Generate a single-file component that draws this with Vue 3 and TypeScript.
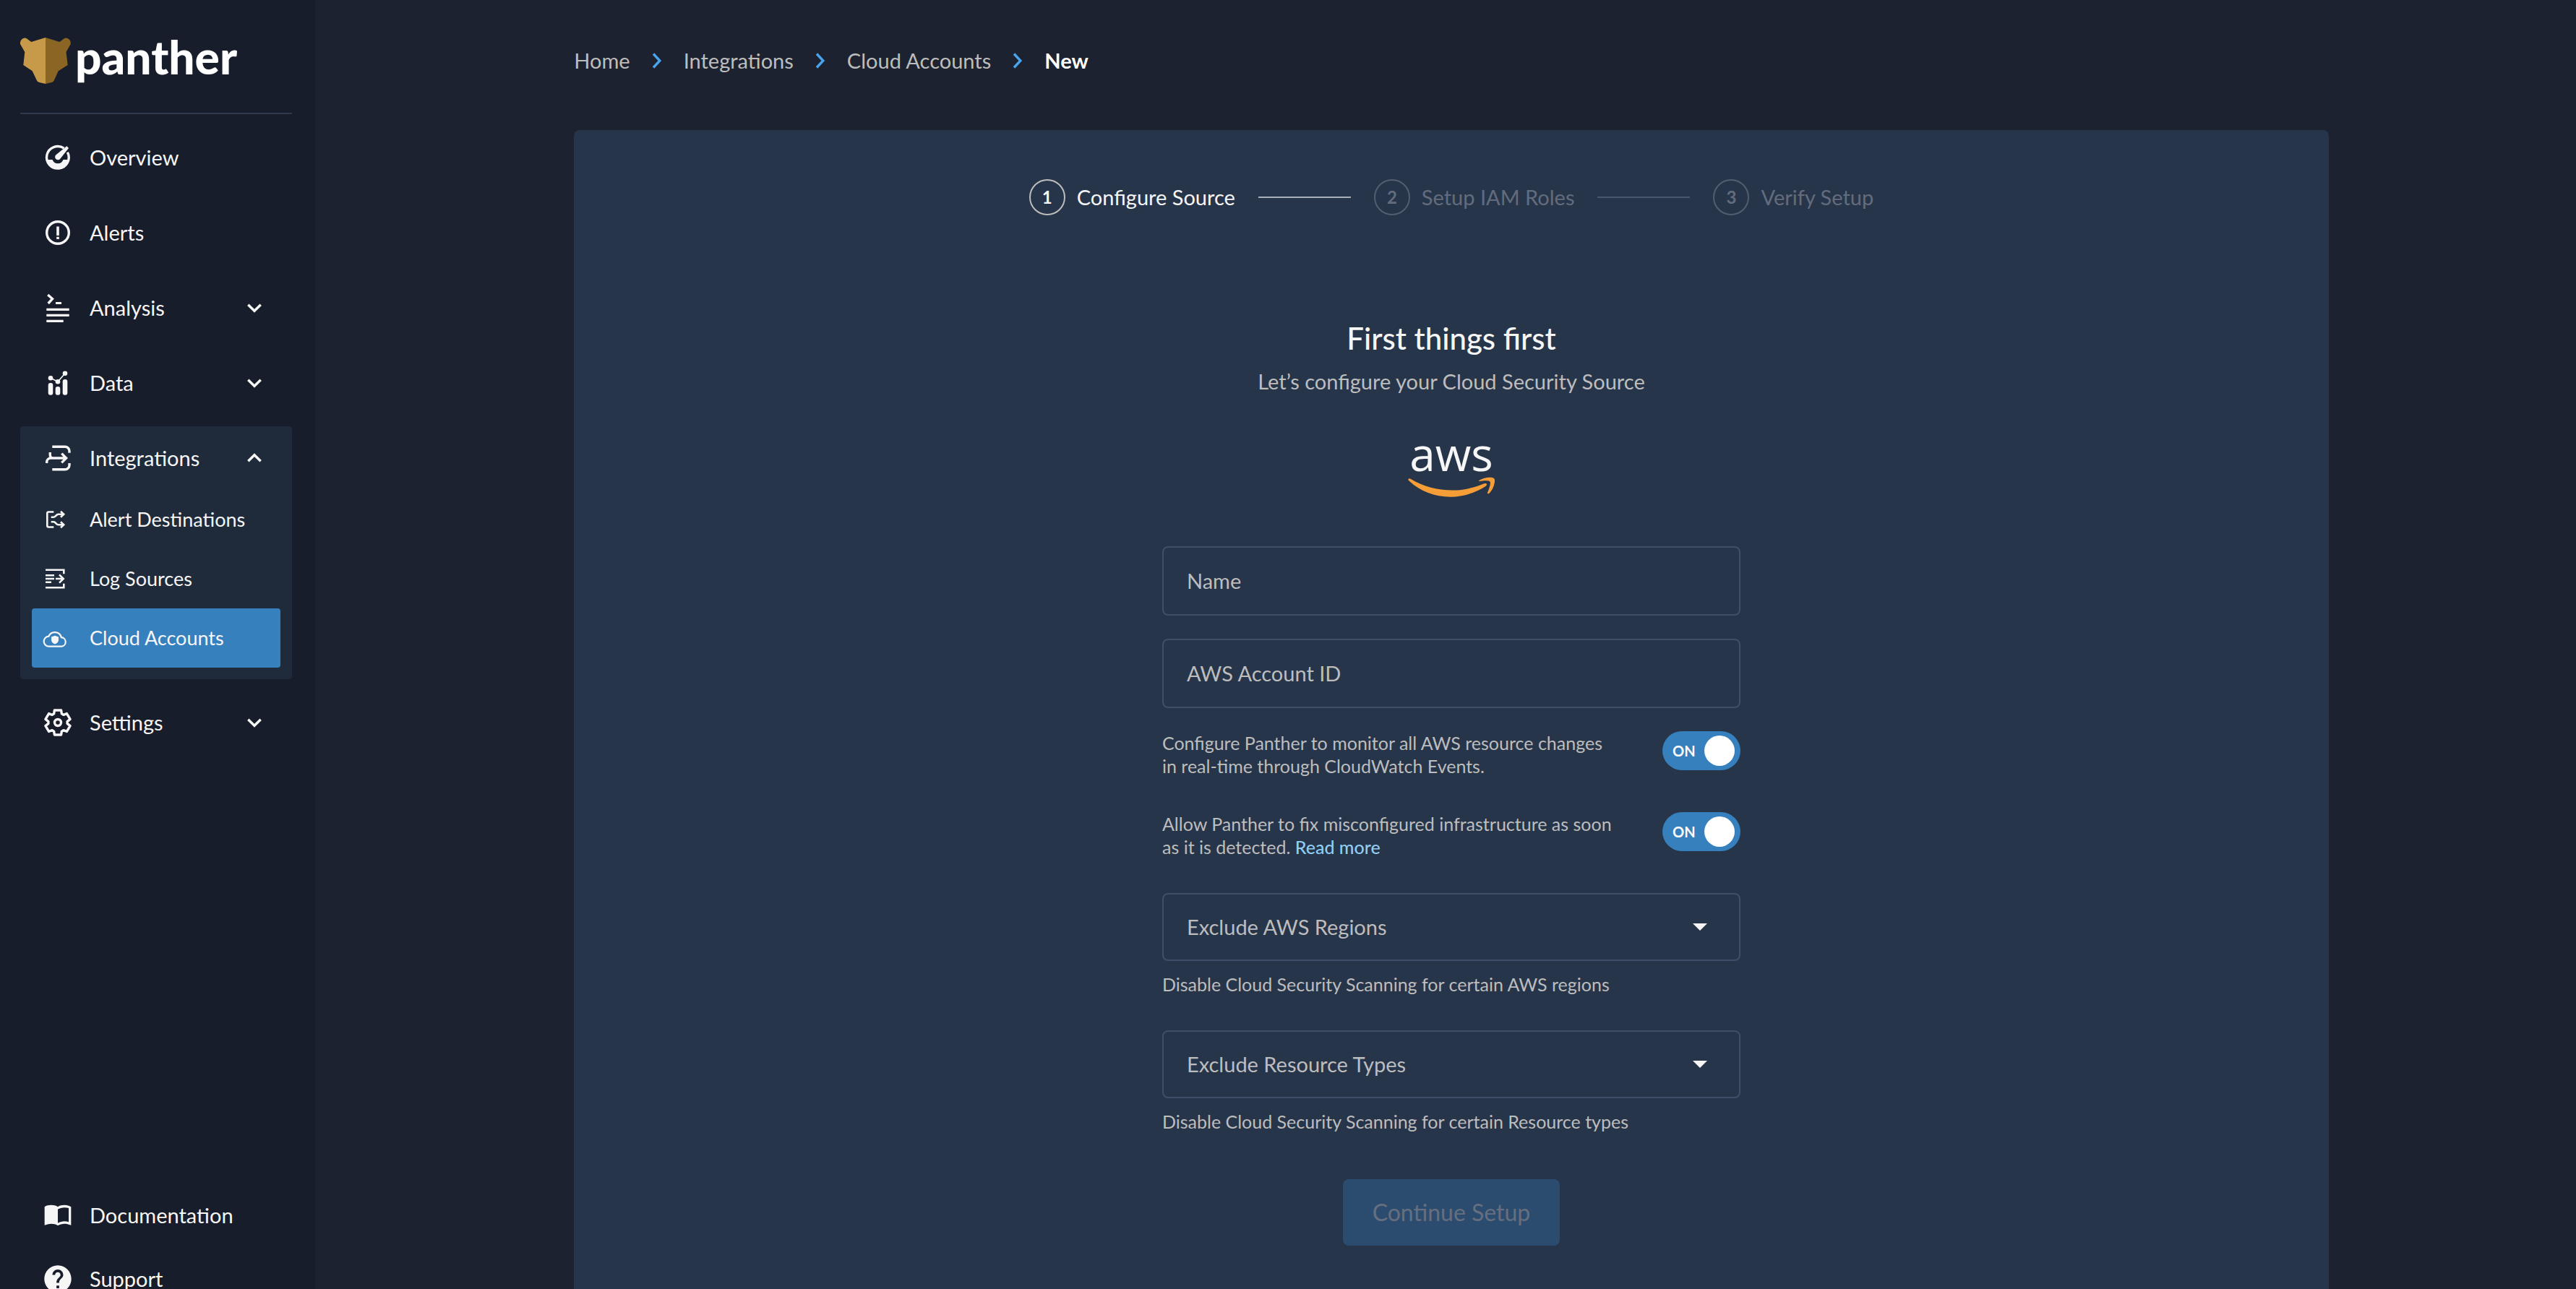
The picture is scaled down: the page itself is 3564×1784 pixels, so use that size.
<script setup lang="ts">
import { ref } from 'vue'

interface NavItem {
  label: string
  icon: string
  chevron?: boolean
}

const primary: NavItem[] = [
  { label: 'Overview', icon: 'overview' },
  { label: 'Alerts', icon: 'alerts' },
  { label: 'Analysis', icon: 'analysis', chevron: true },
  { label: 'Data', icon: 'data', chevron: true },
]
const children: NavItem[] = [
  { label: 'Alert Destinations', icon: 'destinations' },
  { label: 'Log Sources', icon: 'logs' },
  { label: 'Cloud Accounts', icon: 'cloud' },
]
const crumbs: string[] = ['Home', 'Integrations', 'Cloud Accounts']
const steps: string[] = ['Configure Source', 'Setup IAM Roles', 'Verify Setup']

const name = ref('')
const accountId = ref('')
const realTime = ref(true)
const remediation = ref(true)

// Six-toothed gear outline for the settings icon.
const gear: string = Array.from({ length: 6 }, (_, i) => {
  const corners: [number, number][] = [
    [13.2, -24],
    [17.6, -15],
    [17.6, 15],
    [13.2, 24],
  ]
  return corners
    .map(([r, a]) => {
      const t = ((i * 60 + a) * Math.PI) / 180
      return `${(20 + r * Math.sin(t)).toFixed(1)},${(20 - r * Math.cos(t)).toFixed(1)}`
    })
    .join(' ')
}).join(' ')
</script>

<template>
  <div class="app">
    <aside class="sidebar">
      <a class="brand" href="#" aria-label="panther home">
        <svg class="brand-mark" viewBox="0 0 70 64" aria-hidden="true">
          <path fill="#c79a49" d="M35 0 15.300 6 8.500 1Q5.500-.6 2.500 2 0 4.300 0 6.500V9l6.300 11L4.300 38l12.400 8.300L23 59.500q1.200 2.200 3.300 2.600L35 64z" />
          <path fill="#8b6524" d="m35 0 19.500 6 6.700-5q3-1.600 6 1 2.500 2.300 2.500 4.500V9l-6.200 11 2.200 18-13 8.300-6 13.200q-1.200 2.200-3.300 2.600L35 64z" />
        </svg>
        <span class="brand-name">panther</span>
      </a>

      <nav class="nav" aria-label="Main">
        <a v-for="item in primary" :key="item.label" class="nav-item" href="#">
          <svg class="icon" viewBox="0 0 40 40" aria-hidden="true">
            <template v-if="item.icon === 'overview'">
              <path class="line" d="M33.400 12.700A15.300 15.300 0 1 1 28.500 7.200" />
              <path class="solid" d="M5 23h7.500a8 8 0 0 0 15 0H35a15.500 15.500 0 0 1-30 0z" />
              <path class="solid" d="M32.300 4.300 35 7 23.500 21.500a4 4 0 1 1-6-5.200z" />
            </template>
            <template v-else-if="item.icon === 'alerts'">
              <circle class="line" cx="20" cy="20" r="15.300" />
              <path class="solid" d="M18.200 11.400h3.600V24h-3.600zM18.200 25.700h3.600V29h-3.600z" />
            </template>
            <template v-else-if="item.icon === 'analysis'">
              <path class="line" d="m6.200 1.900 6.300 5.700L6.700 14" />
              <path class="solid" d="M17 12h8v3h-8zM4.300 20.700h31.400V24H4.300zM4.300 28.700h31.400V32H4.300zM4.300 36.700h23.400V40H4.300z" />
            </template>
            <template v-else>
              <rect class="solid" x="6.700" y="20" width="6.600" height="16.700" rx="3" />
              <rect class="solid" x="16.700" y="25" width="6.600" height="11.700" rx="3" />
              <rect class="solid" x="26.700" y="15" width="6.600" height="21.700" rx="3" />
              <circle class="solid" cx="10" cy="13.300" r="3.300" />
              <circle class="solid" cx="20" cy="18.300" r="3.300" />
              <circle class="solid" cx="30" cy="6.700" r="3.300" />
              <path class="line hair" d="m10 13.300 10 5 10-11.600" />
            </template>
          </svg>
          <span class="nav-label">{{ item.label }}</span>
          <svg v-if="item.chevron" class="icon" viewBox="0 0 40 40" aria-hidden="true">
            <path class="line" d="m11.300 15.700 8.700 8.600 8.700-8.600" />
          </svg>
        </a>

        <div class="group">
          <a class="nav-item" href="#">
            <svg class="icon" viewBox="0 0 40 40" aria-hidden="true">
              <path class="line" d="M12.300 4.300H30a6 6 0 0 1 6 6v2.500M12.300 35.700H30a6 6 0 0 0 6-6V27M4.700 27v-1.500a5.500 5.500 0 0 1 5.500-5.500H32M9.300 12v4a4 4 0 0 0 4 4M25.300 13.600l6.300 6.400-6.300 6.400" />
            </svg>
            <span class="nav-label">Integrations</span>
            <svg class="icon" viewBox="0 0 40 40" aria-hidden="true">
              <path class="line" d="m11.300 24.300 8.700-8.600 8.700 8.600" />
            </svg>
          </a>
          <a
            v-for="item in children"
            :key="item.label"
            class="sub-item"
            :class="{ active: item.icon === 'cloud' }"
            href="#"
          >
            <svg class="icon small" viewBox="0 0 32 32" aria-hidden="true">
              <path
                v-if="item.icon === 'destinations'"
                class="line"
                d="M14.300 5.500H7.300a2 2 0 0 0-2 2v17a2 2 0 0 0 2 2h7M10.700 12.700h3.500c3 0 3.500-4 6.500-4h7M10.700 19.300h3.500c3 0 3.500 4 6.500 4h7M24 4.700l4.200 4-4.200 4M24 19.300l4.200 4-4.200 4"
              />
              <path
                v-else-if="item.icon === 'logs'"
                class="line"
                d="M3 3.700h25.300v5.600M3 28.300h25.300v-5.600M3 11.300h12M3 16h12M3 20.700h8M17 16h10.500M22 10.400l5.700 5.600-5.700 5.600"
              />
              <template v-else>
                <path class="line thin" d="M25.500 27.700H8a7 7 0 0 1-.6-14 9.200 9.200 0 0 1 17.400 1.500 6.300 6.300 0 0 1 .7 12.500z" />
                <path class="solid" d="m16 12.700 5 1.700v4c0 2.800-2 5-5 6.100-3-1.100-5-3.300-5-6.100v-4z" />
              </template>
            </svg>
            <span>{{ item.label }}</span>
          </a>
        </div>

        <a class="nav-item" href="#">
          <svg class="icon" viewBox="0 0 40 40" aria-hidden="true">
            <polygon class="line" :points="gear" />
            <circle class="line" cx="20" cy="20" r="4.500" />
          </svg>
          <span class="nav-label">Settings</span>
          <svg class="icon" viewBox="0 0 40 40" aria-hidden="true">
            <path class="line" d="m11.300 15.700 8.700 8.600 8.700-8.600" />
          </svg>
        </a>
      </nav>

      <nav class="nav-footer" aria-label="Help">
        <a class="nav-item" href="#">
          <svg class="icon" viewBox="0 1 24 24" aria-hidden="true">
            <path class="solid" d="M21 5c-1.110-.35-2.330-.5-3.500-.5-1.950 0-4.050.4-5.500 1.500-1.450-1.100-3.550-1.500-5.500-1.500S2.450 4.900 1 6v15.300C3.100 20.450 5.050 20 6.500 20c1.950 0 4.050.4 5.500 1.500 1.350-.85 3.800-1.500 5.500-1.500 1.650 0 3.350.3 5.500 1.300V6c-.6-.45-1.250-.75-2-1zm0 13.500c-1.100-.35-2.300-.5-3.500-.5-1.700 0-4.150.65-5.500 1.500V8c1.350-.85 3.800-1.500 5.500-1.500 1.200 0 2.400.15 3.500.5v11.500z" />
          </svg>
          <span class="nav-label">Documentation</span>
        </a>
        <a class="nav-item" href="#">
          <svg class="icon" viewBox="1.300 1.300 21.400 21.400" aria-hidden="true">
            <path class="solid" d="M12 2C6.480 2 2 6.480 2 12s4.480 10 10 10 10-4.480 10-10S17.520 2 12 2zm1 17h-2v-2h2v2zm2.070-7.750l-.9.920C13.450 12.900 13 13.500 13 15h-2v-.5c0-1.100.45-2.100 1.170-2.830l1.240-1.260c.37-.36.59-.86.59-1.410 0-1.100-.9-2-2-2s-2 .9-2 2H8c0-2.210 1.790-4 4-4s4 1.790 4 4c0 .88-.36 1.680-.93 2.250z" />
          </svg>
          <span class="nav-label">Support</span>
        </a>
      </nav>
    </aside>

    <main class="main">
      <div class="content">
        <nav class="crumbs" aria-label="Breadcrumb">
          <template v-for="crumb in crumbs" :key="crumb">
            <a href="#">{{ crumb }}</a>
            <svg viewBox="0 0 24 24" aria-hidden="true">
              <path d="m7 2.500 8.800 9.500L7 21.500" />
            </svg>
          </template>
          <strong>New</strong>
        </nav>

        <section class="card">
          <ol class="steps">
            <li v-for="(step, i) in steps" :key="step" class="step" :class="{ current: i === 0 }">
              <span class="step-number">{{ i + 1 }}</span>
              <span>{{ step }}</span>
            </li>
          </ol>

          <form class="form" @submit.prevent>
            <header class="intro">
              <h1>First things first</h1>
              <p>Let’s configure your Cloud Security Source</p>
            </header>

            <div class="aws" role="img" aria-label="aws">
              <span>aws</span>
              <svg viewBox="0 0 120 28" aria-hidden="true">
                <path d="M.6 2.700C0 3.700.5 4.600 2 6 17 20 37 27.700 59 27.700c17 0 34-5.500 48-14.500 4-2.800 1.500-5.400-2.500-3.600C92 15 76 18.600 62 18.600c-22 0-42-6-58-15.600C2 1.800 1 2 .6 2.700z" />
                <path d="M98 5.600C103 .8 117-.6 119.400 2.400c2 3-1 14.800-7 20.300-1.500 1.300-3 .5-2.300-1.100 1.700-4.100 5-13 3.300-15-1.600-2-10-1.200-13.700-.5-1.800.2-2.700-.4-1.700-.5z" />
              </svg>
            </div>

            <div class="inputs">
              <div class="field">
                <label for="name">Name</label>
                <input id="name" v-model="name" type="text" />
              </div>
              <div class="field">
                <label for="account">AWS Account ID</label>
                <input id="account" v-model="accountId" type="text" />
              </div>
            </div>

            <div class="switches">
              <div class="switch-row">
                <label for="realtime">
                  Configure Panther to monitor all AWS resource changes<br />in real-time through CloudWatch Events.
                </label>
                <span class="switch">
                  <input id="realtime" v-model="realTime" type="checkbox" />
                  <span class="switch-text">{{ realTime ? 'ON' : 'OFF' }}</span>
                  <span class="knob"></span>
                </span>
              </div>
              <div class="switch-row">
                <label for="remediation">
                  Allow Panther to fix misconfigured infrastructure as soon<br />as it is detected. <a href="#">Read more</a>
                </label>
                <span class="switch">
                  <input id="remediation" v-model="remediation" type="checkbox" />
                  <span class="switch-text">{{ remediation ? 'ON' : 'OFF' }}</span>
                  <span class="knob"></span>
                </span>
              </div>
            </div>

            <div class="excludes">
              <div>
                <div class="field select">
                  <label for="regions">Exclude AWS Regions</label>
                  <select id="regions"><option value=""></option></select>
                  <svg viewBox="0 0 20 10" aria-hidden="true"><path d="M0 0h20L10 10z" /></svg>
                </div>
                <p class="hint">Disable Cloud Security Scanning for certain AWS regions</p>
              </div>
              <div>
                <div class="field select">
                  <label for="types">Exclude Resource Types</label>
                  <select id="types"><option value=""></option></select>
                  <svg viewBox="0 0 20 10" aria-hidden="true"><path d="M0 0h20L10 10z" /></svg>
                </div>
                <p class="hint">Disable Cloud Security Scanning for certain Resource types</p>
              </div>
            </div>

            <button class="submit" type="submit" disabled>Continue Setup</button>
          </form>
        </section>
      </div>
    </main>
  </div>
</template>

<style>
body {
  margin: 0;
  background: #1c222f;
}
</style>

<style scoped>
.app {
  display: flex;
  height: 100vh;
  overflow: hidden;
  background: #1c222f;
  color: #f6f6f6;
  font-family: Lato, 'Liberation Sans', sans-serif;
  font-size: 29px;
  line-height: 40px;
}
.app * {
  box-sizing: border-box;
}
a {
  color: inherit;
  text-decoration: none;
}

/* Sidebar */
.sidebar {
  display: flex;
  flex: none;
  flex-direction: column;
  width: 436px;
  height: calc(100vh + 30px);
  padding: 0 32px 0 28px;
  background: #171d2a;
}
.brand {
  display: flex;
  flex: none;
  gap: 6px;
  height: 158px;
  padding-top: 52px;
  border-bottom: 2px solid #2e3b4f;
}
.brand-mark {
  width: 70px;
  height: 64px;
}
.brand-name {
  color: #fff;
  font-size: 64px;
  font-weight: 900;
  line-height: 54px;
}
.nav {
  display: flex;
  flex-direction: column;
  gap: 16px;
  padding-top: 16px;
}
.nav-item {
  display: flex;
  align-items: center;
  gap: 24px;
  height: 88px;
  padding: 0 32px;
}
.nav-label {
  flex: 1;
}
.icon {
  flex: none;
  width: 40px;
  height: 40px;
  overflow: visible;
}
.icon.small {
  width: 32px;
  height: 32px;
}
.line {
  fill: none;
  stroke: #f6f6f6;
  stroke-width: 3.4;
}
.small .line {
  stroke-width: 2.6;
}
.small .thin {
  stroke-width: 2.2;
}
.hair {
  stroke-width: 1.6;
}
polygon.line {
  stroke-linejoin: round;
}
.solid {
  fill: #f6f6f6;
}
.group {
  padding-bottom: 16px;
  border-radius: 4px;
  background: #1f2a3b;
}
.sub-item {
  display: flex;
  align-items: center;
  gap: 32px;
  height: 82px;
  margin: 0 16px;
  padding: 0 16px;
  border-radius: 4px;
  font-size: 27px;
}
.sub-item.active {
  background: #3680be;
}
.nav-footer {
  margin-top: auto;
}

/* Main column */
.main {
  flex: 1;
  padding-left: 16px;
}
.content {
  width: 78%;
  margin: 0 auto;
}
.crumbs {
  display: flex;
  align-items: center;
  gap: 25px;
  height: 180px;
  padding-bottom: 12px;
  color: #bdbdbd;
}
.crumbs svg {
  width: 24px;
  height: 24px;
  fill: none;
  stroke: #4aa3ec;
  stroke-width: 3.4;
}
.crumbs strong {
  color: #fff;
}
.card {
  padding: 68px 0 96px;
  border-radius: 8px;
  background: #27354b;
}
.steps {
  display: flex;
  justify-content: center;
  margin: 0;
  padding: 0;
  list-style: none;
}
.step {
  display: flex;
  align-items: center;
  gap: 16px;
  color: #626c7d;
}
.step.current {
  color: #f6f6f6;
}
.step:not(:last-child)::after {
  width: 128px;
  height: 2px;
  margin: 0 32px 0 16px;
  background: #4a566b;
  content: '';
}
.step.current::after {
  background: #a9afb8;
}
.step-number {
  display: grid;
  place-items: center;
  width: 50px;
  height: 50px;
  border: 2px solid #535e70;
  border-radius: 50%;
  font-size: 24px;
  font-weight: 700;
}
.current .step-number {
  border-color: #bdbdbd;
}

/* Form */
.form {
  display: flex;
  flex-direction: column;
  width: 800px;
  margin: 0 auto;
  padding-top: 140px;
}
.intro {
  text-align: center;
}
.intro h1 {
  margin: 0 0 10px;
  font-size: 42px;
  font-weight: 500;
  line-height: 60px;
}
.intro p {
  margin: 0;
  color: #bdbdbd;
}
.aws {
  align-self: center;
  width: 120px;
  margin-top: 48px;
  text-align: center;
}
.aws span {
  display: block;
  font-family: 'Open Sans', sans-serif;
  font-size: 64px;
  font-weight: 500;
  line-height: 64px;
}
.aws svg {
  display: block;
  width: 120px;
  height: 28px;
  fill: #f59e38;
}
.inputs {
  display: grid;
  gap: 32px;
  margin-top: 68px;
}
.field {
  display: grid;
  align-items: center;
  height: 96px;
}
.field > * {
  grid-area: 1 / 1;
}
.field label {
  padding-left: 34px;
  color: #bdbdbd;
}
.field input,
.field select {
  width: 100%;
  height: 100%;
  margin: 0;
  padding: 0 32px;
  border: 2px solid #404e68;
  border-radius: 8px;
  background: transparent;
  color: #f6f6f6;
  font: inherit;
  appearance: none;
}
.field.select {
  height: 94px;
}
.field svg {
  justify-self: end;
  width: 20px;
  height: 10px;
  margin-right: 46px;
  fill: #f6f6f6;
  pointer-events: none;
}
.switches {
  display: grid;
  gap: 48px;
  margin: 32px 0 48px;
  color: #bdbdbd;
  font-size: 25px;
  line-height: 32px;
}
.switch-row {
  display: flex;
  align-items: flex-start;
  justify-content: space-between;
}
.switch-row a {
  color: #90cdf4;
  font-weight: 500;
}
.switch {
  position: relative;
  display: grid;
  grid-template-columns: 1fr 42px;
  align-items: center;
  width: 108px;
  height: 54px;
  padding: 0 8px 0 14px;
  border-radius: 27px;
  background: #3680be;
}
.switch input {
  position: absolute;
  inset: 0;
  margin: 0;
  opacity: 0;
}
.switch-text {
  color: #fff;
  font-size: 20px;
  font-weight: 700;
}
.knob {
  width: 42px;
  height: 42px;
  border-radius: 50%;
  background: #fff;
}
.excludes {
  display: grid;
  gap: 48px;
}
.hint {
  margin: 16px 0 0;
  color: #bdbdbd;
  font-size: 25px;
  line-height: 32px;
}
.submit {
  align-self: center;
  width: 300px;
  height: 92px;
  margin-top: 64px;
  border: 0;
  border-radius: 8px;
  background: #2b4c6e;
  color: #666f7f;
  font: inherit;
  font-size: 32px;
}
</style>
